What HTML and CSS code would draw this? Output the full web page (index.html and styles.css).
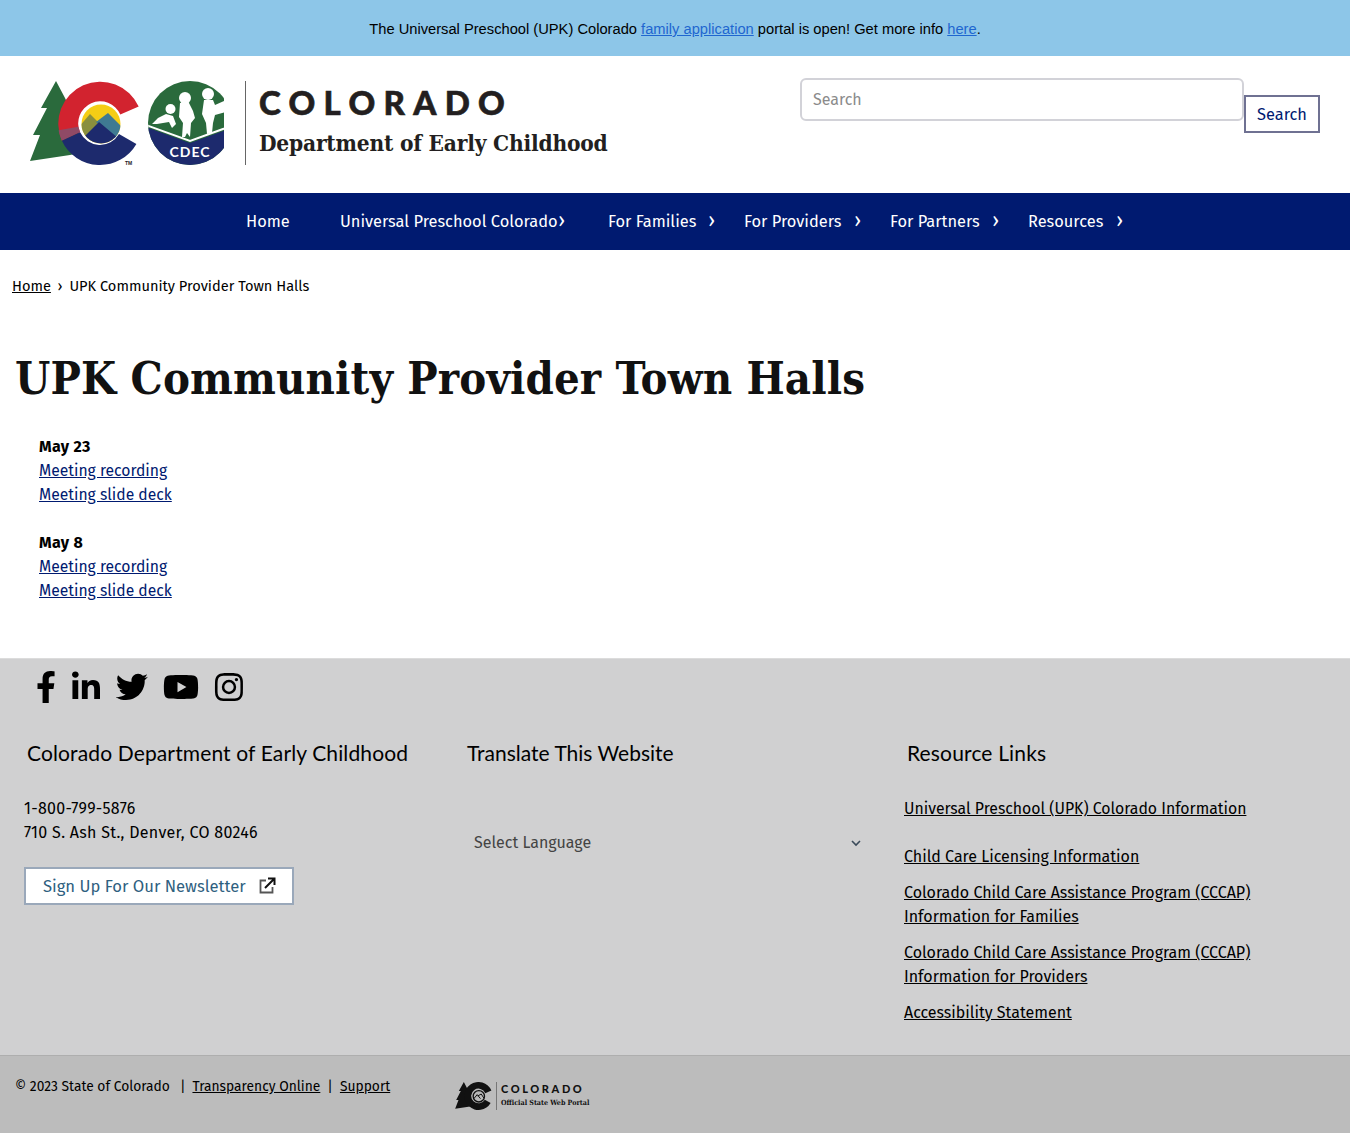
FILE: index.html
```html
<!DOCTYPE html>
<html lang="en">
<head>
  <meta charset="UTF-8">
  <meta name="viewport" content="width=device-width, initial-scale=1.0">
  <title>UPK Community Provider Town Halls</title>
  <link rel="stylesheet" href="styles.css">
</head>
<body>
  <div class="banner">
    The Universal Preschool (UPK) Colorado <a href="#">family application</a> portal is open! Get more info <a href="#">here</a>.
  </div>

  <header class="site-header">
    <a class="brand" href="#">
      <svg class="brand-mark" width="194" height="86" viewBox="0 0 194 86">
        <defs>
          <clipPath id="sunClip"><circle cx="71" cy="43" r="19.500"/></clipPath>
          <clipPath id="sealClip"><circle cx="160" cy="42" r="42"/></clipPath>
        </defs>
        <path fill="#2a6a3c" d="M26 0L11 27H17L3 54H10L0 80L40 74L60 70L35 17Z"/>
        <circle cx="70" cy="42" r="24" fill="#fff"/>
        <path fill="#d2232f" d="M108.700 25.600A42 42 0 1 0 31.900 59.700L50.100 51.300A22 22 0 1 1 90.300 33.400Z"/>
        <path fill="#8f4a66" d="M31.900 59.700L50.100 51.300L48.300 45.800L28.600 49.300Q29.500 54.500 31.900 59.700Z"/>
        <path fill="#1d2a6d" d="M31.900 59.700A42 42 0 0 0 106.400 63L89 53A22 22 0 0 1 50.100 51.300Z"/>
        <g clip-path="url(#sunClip)">
          <rect x="50" y="22" width="42" height="42" fill="#f5cd15"/>
          <path fill="#8a8f3e" d="M48 47L60 33L74 47L60 64H48Z"/>
          <path fill="#3f7a92" d="M66 41L78 32L94 48L86 58Z"/>
          <path fill="#1d2a6d" d="M48 62L69 41L94 62V66H48Z"/>
        </g>
        <text x="95" y="84" class="tm-mark">TM</text>
        <circle cx="160" cy="42" r="42" fill="#2a6a3c"/>
        <g clip-path="url(#sealClip)">
          <path fill="#1d2a6d" d="M116 46L160 62L204 46V86H116Z"/>
          <path fill="none" stroke="#fff" stroke-width="2" d="M116 44L160 60L204 44"/>
        </g>
        <g fill="#fff">
          <circle cx="140.500" cy="28" r="5"/>
          <path d="M122 43L128 37L136 33L143 35L146 43L142 47L139 41L133 42L127 43Z"/>
          <circle cx="155" cy="17" r="6"/>
          <path d="M150 22H159L163 30L165 37L161 42L160 56L157 52L155 56H152L153 42L149 36Z"/>
          <circle cx="178" cy="13" r="6"/>
          <path d="M174 19H183L185 24L194 20L196 31L185 34L183 42L182 52L177 53L176 42L172 33Z"/>
        </g>
        <text x="160" y="76" class="cdec-mark" text-anchor="middle">CDEC</text>
      </svg>
      <span class="brand-rule"></span>
      <span class="brand-text">
        <span class="brand-state">COLORADO</span>
        <span class="brand-dept">Department of Early Childhood</span>
      </span>
    </a>
    <form class="search-form" onsubmit="return false">
      <input class="search-input" type="text" placeholder="Search">
      <button class="search-btn" type="submit">Search</button>
    </form>
  </header>

  <nav class="main-nav">
    <a class="nav-item" href="#">Home</a>
    <a class="nav-item nav-upk" href="#">Universal Preschool Colorado<span class="nav-caret">›</span></a>
    <a class="nav-item" href="#">For Families<span class="nav-caret">›</span></a>
    <a class="nav-item" href="#">For Providers<span class="nav-caret">›</span></a>
    <a class="nav-item" href="#">For Partners<span class="nav-caret">›</span></a>
    <a class="nav-item" href="#">Resources<span class="nav-caret">›</span></a>
  </nav>

  <div class="breadcrumb">
    <a href="#">Home</a><span class="crumb-sep">›</span><span>UPK Community Provider Town Halls</span>
  </div>

  <main class="content">
    <h1>UPK Community Provider Town Halls</h1>
    <div class="meetings">
      <p>
        <strong>May 23</strong><br>
        <a href="#">Meeting recording</a><br>
        <a href="#">Meeting slide deck</a>
      </p>
      <p>
        <strong>May 8</strong><br>
        <a href="#">Meeting recording</a><br>
        <a href="#">Meeting slide deck</a>
      </p>
    </div>
  </main>

  <footer class="site-footer">
    <div class="social">
      <svg width="20" height="32" viewBox="0 0 320 512"><path d="M279 288l14-93h-89v-60c0-25 12-50 52-50h41V7s-37-7-72-7C152 0 105 44 105 124v71H24v93h81v224h99V288z"/></svg>
      <svg width="30" height="32" viewBox="0 0 448 512"><path d="M100 448H7V149h93zM54 108C24 108 0 83 0 54a54 54 0 0 1 107 0c0 29-24 54-53 54zm394 340h-93V302c0-35-1-79-48-79-49 0-56 38-56 77v148h-93V149h89v41h1c12-24 43-48 88-48 94 0 112 62 112 142z"/></svg>
      <svg width="32" height="32" viewBox="0 0 512 512"><path d="M459 152c.3 4.500.3 9 .3 13.600 0 139-105.800 299-299.300 299-59.600 0-115-17.300-161.600-47.200 8.500 1 16.600 1.300 25.400 1.300 49.200 0 94.500-16.600 130.600-45-46.200-1-85-31.300-98.300-72.900 6.500 1 13 1.600 19.800 1.600 9.400 0 19-1.300 27.700-3.600-48.300-9.700-84.500-52.200-84.500-103.400v-1.300c14 7.800 30.200 12.700 47.500 13.300-28.400-18.900-47-51.200-47-87.900 0-19.500 5.200-37.400 14.300-53C85.700 127.400 163 169 250 173.500c-1.600-7.800-2.600-15.900-2.600-24 0-58 47-105.300 105.300-105.300 30.300 0 57.800 12.700 77 33.200 23.800-4.500 46.600-13.300 67-25.600-7.800 24.600-24.300 45.200-46 58.200 21.100-2.300 41.600-8.100 60.400-16.200-14.300 20.800-32.200 39.300-52.700 54.200z"/></svg>
      <svg width="36" height="32" viewBox="0 0 576 512"><path d="M550 124c-6-24-25-42-48-49C459 64 288 64 288 64S117 64 74 75c-23 7-42 25-48 49-12 43-12 132-12 132s0 90 12 133c6 23 25 41 48 48 43 11 214 11 214 11s171 0 214-11c23-7 42-25 48-48 12-43 12-133 12-133s0-89-12-132zM232 338V175l143 81z"/></svg>
      <svg width="30" height="32" viewBox="0 0 448 512"><path d="M224 141a115 115 0 1 0 0 230 115 115 0 0 0 0-230zm0 190a75 75 0 1 1 0-150 75 75 0 0 1 0 150zm146-194a27 27 0 1 1-54 0 27 27 0 0 1 54 0zm76 27c-2-36-10-68-36-94s-58-34-94-36c-37-2-148-2-185 0-36 2-68 10-94 36s-34 58-36 94c-2 37-2 148 0 185 2 36 10 68 36 94s58 34 94 36c37 2 148 2 185 0 36-2 68-10 94-36s34-58 36-94c2-37 2-148 0-185zm-48 225c-8 20-23 35-43 43-30 12-100 9-131 9s-102 3-131-9c-20-8-35-23-43-43-12-30-9-100-9-131s-3-102 9-131c8-20 23-35 43-43 30-12 100-9 131-9s102 3 131 9c20 8 35 23 43 43 12 30 9 100 9 131s3 102-9 131z"/></svg>
    </div>

    <div class="footer-cols">
      <section class="footer-col col-contact">
        <h2>Colorado Department of Early Childhood</h2>
        <p class="contact-lines">1-800-799-5876<br>710 S. Ash St., Denver, CO 80246</p>
        <a class="newsletter" href="#">Sign Up For Our Newsletter
          <svg width="18" height="18" viewBox="0 0 18 18" fill="none"><path d="M8 3.500H2.500V15.500H14.500V10" stroke="#555" stroke-width="1.800"/><path d="M7 11L16 2M10 1.500H16.500V8" stroke="#111" stroke-width="2"/></svg>
        </a>
      </section>
      <section class="footer-col col-translate">
        <h2>Translate This Website</h2>
        <div class="lang-select">
          <span>Select Language</span>
          <svg width="10" height="7" viewBox="0 0 10 7" fill="none"><path d="M1 1L5 5L9 1" stroke="#3a4a5a" stroke-width="1.600"/></svg>
        </div>
      </section>
      <section class="footer-col col-links">
        <h2>Resource Links</h2>
        <ul class="resource-list">
          <li class="first-link"><a href="#">Universal Preschool (UPK) Colorado Information</a></li>
          <li><a href="#">Child Care Licensing Information</a></li>
          <li><a href="#">Colorado Child Care Assistance Program (CCCAP) Information for Families</a></li>
          <li><a href="#">Colorado Child Care Assistance Program (CCCAP) Information for Providers</a></li>
          <li><a href="#">Accessibility Statement</a></li>
        </ul>
      </section>
    </div>
  </footer>

  <div class="legal">
    <div class="legal-text">
      © 2023 State of Colorado<span class="legal-sep legal-sep-first">|</span><a href="#">Transparency Online</a><span class="legal-sep">|</span><a href="#">Support</a>
    </div>
    <a class="portal-logo" href="#">
      <svg width="37" height="28" viewBox="0 0 110 84">
        <path fill="#111" d="M26 0L11 27H17L3 54H10L0 80L40 74L60 70L35 17Z"/>
        <circle cx="70" cy="42" r="24" fill="#bababa"/>
        <path fill="#111" d="M108.700 25.600A42 42 0 1 0 106.400 63L89 53A22 22 0 1 1 90.300 33.400Z"/>
        <circle cx="71" cy="43" r="17" fill="none" stroke="#111" stroke-width="4"/>
        <path fill="none" stroke="#111" stroke-width="3" d="M56 50L66 38L76 50M68 42L78 36L86 48"/>
      </svg>
      <span class="portal-rule"></span>
      <span class="portal-text">
        <span class="portal-state">COLORADO</span>
        <span class="portal-sub">Official State Web Portal</span>
      </span>
    </a>
  </div>
</body>
</html>
```

FILE: styles.css
```css
body {
  margin: 0;
  font-family: "Fira Sans", "Noto Sans", sans-serif;
  font-size: 16px;
  line-height: 24px;
  color: #000;
  background: #fff;
}

.banner {
  height: 56px;
  line-height: 58px;
  background: #8dc6e8;
  text-align: center;
  font-family: "Liberation Sans", Arial, sans-serif;
  font-size: 14.700px;
}

.banner a {
  color: #1f66d0;
}

.site-header {
  height: 137px;
  display: flex;
  justify-content: space-between;
  align-items: flex-start;
  padding: 0 30px;
}

.brand {
  display: flex;
  align-items: flex-start;
  margin-top: 25px;
  color: #231f20;
  text-decoration: none;
}

.brand-mark {
  display: block;
}

.tm-mark {
  font-family: "Liberation Sans", sans-serif;
  font-size: 5px;
  font-weight: bold;
  fill: #222;
}

.cdec-mark {
  font-family: "Lato", sans-serif;
  font-size: 14px;
  font-weight: 700;
  letter-spacing: 1px;
  fill: #fff;
}

.brand-rule {
  width: 1px;
  height: 84px;
  margin-left: 21px;
  background: #666;
}

.brand-text {
  display: flex;
  flex-direction: column;
  margin-left: 13px;
}

.brand-state {
  font-family: "Lato", sans-serif;
  font-weight: 900;
  font-size: 33px;
  line-height: 40px;
  letter-spacing: 8.300px;
  margin-top: 1px;
  -webkit-text-stroke: 0.6px #231f20;
}

.brand-dept {
  font-family: "DejaVu Serif", serif;
  font-stretch: condensed;
  font-weight: 700;
  font-size: 22.500px;
  line-height: 28px;
  margin-top: 7px;
  letter-spacing: -0.2px;
}

.search-form {
  display: flex;
  align-items: flex-start;
  margin-top: 22px;
}

.search-input {
  width: 444px;
  height: 43px;
  box-sizing: border-box;
  padding: 0 11px;
  border: 2px solid #d2d2d8;
  border-radius: 6px;
  font-family: inherit;
  font-size: 16px;
  color: #333;
}

.search-input::placeholder {
  color: #8b8b8b;
}

.search-btn {
  width: 76px;
  height: 38px;
  margin-top: 17px;
  box-sizing: border-box;
  border: 2px solid #6f7192;
  background: #fff;
  font-family: inherit;
  font-size: 16.400px;
  color: #001a70;
  padding: 0;
}

.main-nav {
  height: 57px;
  background: #001a70;
  display: grid;
  grid-template-columns: 94px 268px 136px 146px 138px 124px;
  justify-content: center;
}

.nav-item {
  display: flex;
  align-items: center;
  padding-left: 24px;
  color: #fff;
  font-size: 16.400px;
  text-decoration: none;
  white-space: nowrap;
  position: relative;
}

.nav-caret {
  position: absolute;
  right: 5px;
  top: 15px;
  font-size: 20px;
}

.nav-upk .nav-caret {
  right: 19px;
}

.breadcrumb {
  padding: 24px 12px 0;
  font-size: 14.600px;
}

.breadcrumb a {
  color: #000;
}

.crumb-sep {
  margin: 0 7px 0 6.500px;
}

.content {
  padding: 0 15px;
}

h1 {
  margin: 51px 0 0;
  font-family: "DejaVu Serif", serif;
  font-stretch: condensed;
  font-size: 45px;
  line-height: 60px;
  font-weight: 700;
  letter-spacing: 0.12px;
  color: #111;
}

.meetings {
  padding: 26px 24px 0;
}

.meetings p {
  margin: 0 0 24px;
}

.meetings strong {
  letter-spacing: 0.3px;
}

.meetings a {
  color: #001a70;
  font-size: 15.700px;
}

.site-footer {
  height: 397px;
  box-sizing: border-box;
  border-top: 1px solid #dcdcdc;
  background: #d0d0d1;
  margin-top: 55px;
}

.social {
  display: flex;
  align-items: center;
  gap: 15px;
  padding: 12px 0 0 36px;
}

.footer-cols {
  display: grid;
  grid-template-columns: 440px 440px 1fr;
  padding: 0 0 0 24px;
  margin-top: 35px;
}

.footer-col h2 {
  margin: 0 0 0 3px;
  font-family: "Lato", sans-serif;
  font-weight: 400;
  font-size: 21px;
  line-height: 30px;
}

.col-contact h2 {
  letter-spacing: 0.13px;
}

.col-links h2 {
  letter-spacing: 0.15px;
}

.contact-lines {
  margin: 29px 0 22px;
  letter-spacing: 0.3px;
}

.newsletter {
  display: flex;
  align-items: center;
  justify-content: space-between;
  width: 270px;
  height: 38px;
  box-sizing: border-box;
  padding: 0 16px 0 17px;
  border: 2px solid #9aa8ba;
  background: #fff;
  color: #2f5f7f;
  text-decoration: none;
  font-size: 16.600px;
}

.lang-select {
  display: flex;
  align-items: center;
  justify-content: space-between;
  width: 387px;
  margin-top: 63px;
  padding-left: 10px;
  color: #444;
}

.resource-list {
  list-style: none;
  margin: 29px 0 0;
  padding: 0;
  width: 360px;
}

.resource-list li {
  margin-bottom: 12px;
}

.resource-list .first-link {
  margin-bottom: 24px;
  font-size: 15.800px;
}

.resource-list a {
  color: #000;
}

.legal {
  height: 78px;
  background: #bcbcbc;
  display: flex;
  align-items: flex-start;
  border-top: 1px solid #aeaeae;
  box-sizing: border-box;
}

.legal-text {
  padding: 19px 0 0 15px;
  width: 440px;
  font-size: 13.800px;
}

.legal-text a {
  color: #000;
}

.legal-sep {
  margin: 0 7px;
}

.legal-sep-first {
  margin-left: 10px;
}

.portal-logo {
  display: flex;
  align-items: center;
  margin-top: 26px;
  color: #111;
  text-decoration: none;
}

.portal-rule {
  width: 1px;
  height: 28px;
  background: #777;
  margin: 0 4px;
}

.portal-text {
  display: flex;
  flex-direction: column;
  margin-bottom: 2px;
}

.portal-state {
  font-family: "Lato", sans-serif;
  font-weight: 900;
  font-size: 11px;
  line-height: 13px;
  letter-spacing: 2.600px;
}

.portal-sub {
  font-family: "DejaVu Serif", serif;
  font-stretch: condensed;
  font-weight: 700;
  font-size: 7.100px;
  line-height: 11px;
  margin-top: 2px;
}
```
